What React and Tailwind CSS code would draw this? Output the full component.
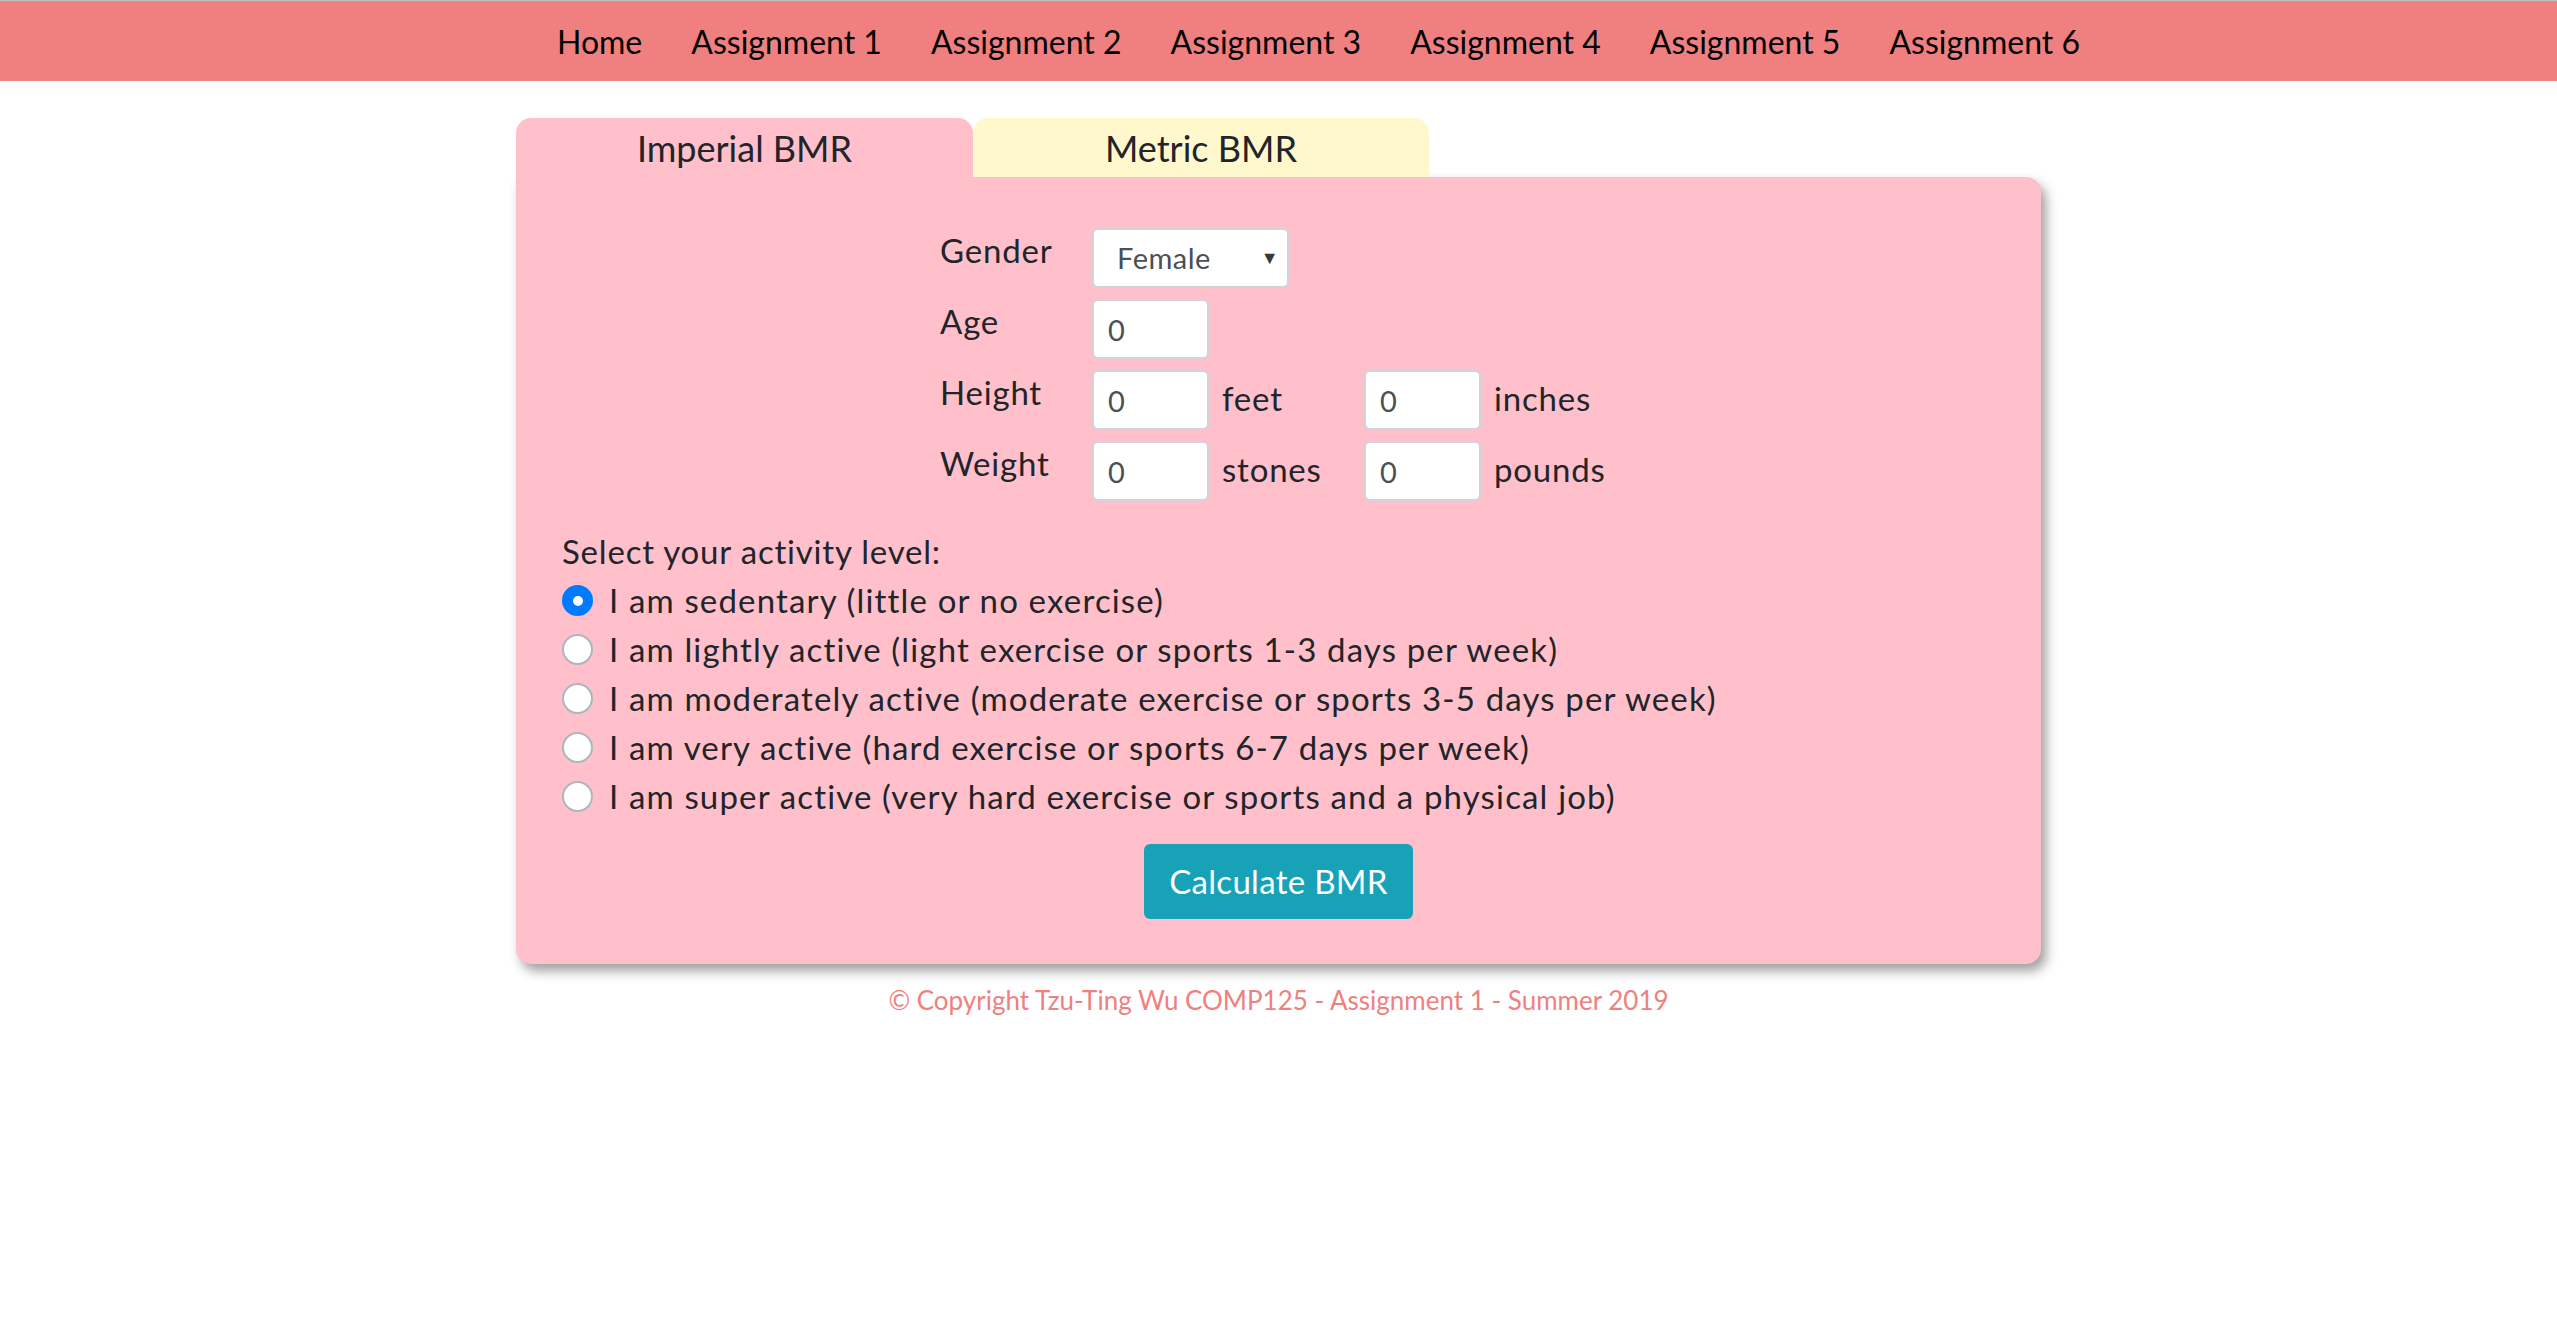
import React from "react";

const navItems = ["Home", "Assignment 1", "Assignment 2", "Assignment 3", "Assignment 4", "Assignment 5", "Assignment 6"];

const activities = [
  "I am sedentary (little or no exercise)",
  "I am lightly active (light exercise or sports 1-3 days per week)",
  "I am moderately active (moderate exercise or sports 3-5 days per week)",
  "I am very active (hard exercise or sports 6-7 days per week)",
  "I am super active (very hard exercise or sports and a physical job)",
];

function NumInput() {
  return (
    <input
      type="text"
      defaultValue="0"
      className="w-[117px] h-[60px] shrink-0 rounded-[6px] border-2 border-[#ced4da] bg-white px-[14px] text-[29px] tracking-[0.5px] text-[#495057] outline-none"
    />
  );
}

function Label({ children }) {
  return <div className="w-[152px] shrink-0 text-[33px] tracking-[0.8px] leading-[45px] text-[#212529]">{children}</div>;
}

function Unit({ children, w }) {
  return <div className={`ml-[13px] h-[58px] flex items-center text-[33px] tracking-[0.8px] text-[#212529] ${w}`}>{children}</div>;
}

export default function App() {
  return (
    <div className="min-h-[1325px] bg-white font-['Lato','Carlito','Open_Sans',sans-serif]">
      <nav className="h-[81px] border-t border-[#c0c0c0] bg-[#f08080] flex items-center justify-center pl-[80px] pt-[2px] gap-[49px]">
        {navItems.map((n) => (
          <a key={n} className="text-[32px] text-black leading-none cursor-pointer">{n}</a>
        ))}
      </nav>

      <div className="w-[1525px] mx-auto mt-[37px]">
        <div className="flex">
          <div className="w-[457px] h-[59px] rounded-t-[15px] bg-[#ffc0cb] flex items-center justify-center text-[36px] text-[#212529]">
            Imperial BMR
          </div>
          <div className="w-[456px] h-[59px] rounded-t-[15px] bg-[#fff8cd] flex items-center justify-center text-[36px] text-[#212529]">
            Metric BMR
          </div>
        </div>

        <div className="bg-[#ffc0cb] rounded-b-[15px] rounded-tr-[15px] shadow-[5px_7px_12px_rgba(0,0,0,0.38)] pt-[51px] pb-[45px]">
          <div className="ml-[424px] flex flex-col gap-[11px]">
            <div className="flex items-start">
              <Label>Gender</Label>
              <div className="relative w-[197px] h-[60px] rounded-[6px] border-2 border-[#ced4da] bg-white flex items-center pl-[23px] text-[29px] tracking-[0.5px] text-[#495057]">
                Female
                <span className="absolute right-[8px] top-[18px] text-[18px] leading-none text-[#343a40]">▼</span>
              </div>
            </div>
            <div className="flex items-start">
              <Label>Age</Label>
              <NumInput />
            </div>
            <div className="flex items-start">
              <Label>Height</Label>
              <NumInput />
              <Unit w="w-[142px]">feet</Unit>
              <NumInput />
              <Unit w="">inches</Unit>
            </div>
            <div className="flex items-start">
              <Label>Weight</Label>
              <NumInput />
              <Unit w="w-[142px]">stones</Unit>
              <NumInput />
              <Unit w="">pounds</Unit>
            </div>
          </div>

          <div className="ml-[46px] mt-[26px]">
            <div className="text-[33px] tracking-[0.8px] leading-[49px] text-[#212529]">Select your activity level:</div>
            {activities.map((a, i) => (
              <label key={a} className="flex items-center h-[49px] text-[33px] tracking-[1.15px] text-[#212529]">
                <span
                  className={
                    i === 0
                      ? "w-[31px] h-[31px] rounded-full bg-[#007bff] flex items-center justify-center shrink-0"
                      : "w-[31px] h-[31px] rounded-full bg-white border-2 border-[#adb5bd] shrink-0"
                  }
                >
                  {i === 0 && <span className="w-[10px] h-[10px] rounded-full bg-white" />}
                </span>
                <span className="ml-[16px]">{a}</span>
              </label>
            ))}
          </div>

          <div className="flex justify-center mt-[23px]">
            <button className="w-[269px] h-[75px] rounded-[6px] bg-[#17a2b8] text-white text-[33px] tracking-[0.3px]">
              Calculate BMR
            </button>
          </div>
        </div>

        <div className="mt-[17px] text-center text-[26px] text-[#f08080]">
          © Copyright Tzu-Ting Wu COMP125 - Assignment 1 - Summer 2019
        </div>
      </div>
    </div>
  );
}
